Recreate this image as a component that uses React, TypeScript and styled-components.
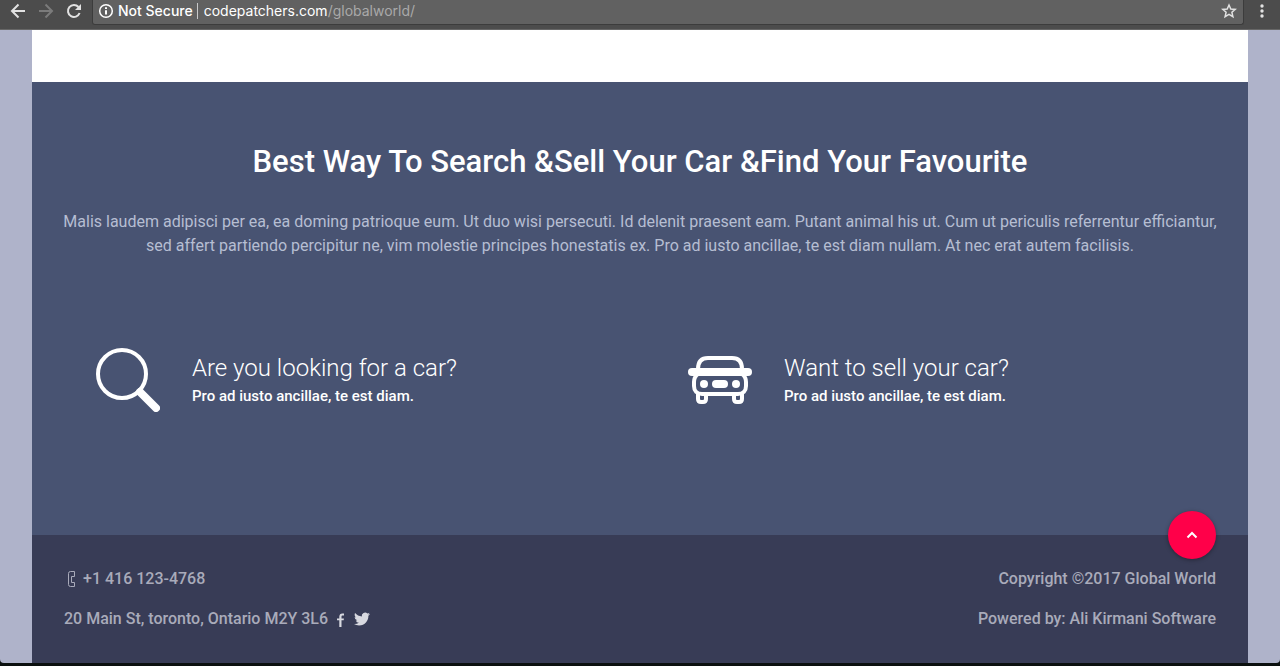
import React from 'react';
import styled, { createGlobalStyle } from 'styled-components';

const GlobalStyle = createGlobalStyle`
  *, *::before, *::after { box-sizing: border-box; }
  body { margin: 0; background: #0b100f; }
  h1, h2, p { margin: 0; font-weight: inherit; }
  button, input { font: inherit; color: inherit; border: 0; padding: 0; margin: 0; background: none; }
  a { color: inherit; text-decoration: none; }
  svg { display: block; flex: none; }
`;

const Window = styled.div`
  display: flex;
  flex-direction: column;
  min-height: 100vh;
  padding-bottom: 3px;
  font-family: Roboto, "Open Sans", sans-serif;
  font-size: 16px;
  line-height: 24px;
`;

const Toolbar = styled.header`
  display: flex;
  align-items: flex-start;
  height: 30px;
  background: #4c4c4c;
  border-bottom: 1px solid #676767;
  color: #e2e2e2;
  font-family: Inter, "Liberation Sans", sans-serif;
  font-size: 14px;
`;

const NavButtons = styled.nav`
  display: flex;
  gap: 12px;
  padding: 3px 10px 0 10px;
`;

const IconButton = styled.button`
  display: block;
  cursor: pointer;
  &:disabled { color: #7b7b7b; cursor: default; }
`;

const AddressBar = styled.div`
  display: flex;
  align-items: center;
  flex: 1;
  height: 25px;
  padding: 0 6px 2px 5px;
  background: #616161;
  border: 1px solid #3c3c3c;
  border-top: 0;
  border-radius: 0 0 3px 3px;
  color: #fff;
`;

const Security = styled.span`
  display: flex;
  align-items: center;
  gap: 4px;
  height: 16px;
  padding-right: 4px;
  margin-right: 6px;
  border-right: 1px solid #c9c9c9;
  font-weight: 500;
`;

const HostInput = styled.input`
  field-sizing: content;
  outline: 0;
`;

const UrlPath = styled.span`
  flex: 1;
  color: #a9a9a9;
`;

const MenuButton = styled(IconButton)`
  padding: 3px 10px 0;
`;

const Backdrop = styled.div`
  display: flex;
  flex: 1;
  padding: 0 32px;
  background: #afb3ca;
  border-radius: 0 0 4px 4px;
`;

const Page = styled.div`
  display: flex;
  flex-direction: column;
  flex: 1;
  padding-top: 52px;
  background: #fff;
`;

const Promo = styled.main`
  flex: 1;
  padding: 56px 16px 112px;
  background: #485372;
  color: #fff;
`;

const Title = styled.h1`
  font-size: 31px;
  line-height: 48px;
  font-weight: 500;
  text-align: center;
`;

const Lead = styled.p`
  padding: 0 8px;
  margin-top: 24px;
  color: #b6bed2;
  text-align: center;
`;

const Features = styled.div`
  display: grid;
  grid-template-columns: 1fr 1fr;
  margin-top: 90px;
`;

const Feature = styled.section`
  display: flex;
  align-items: center;
  gap: 32px;
  padding-left: 48px;
`;

const FeatureTitle = styled.h2`
  font-size: 24px;
  line-height: 32px;
  font-weight: 300;
`;

const FeatureText = styled.p`
  font-size: 15px;
  font-weight: 500;
`;

const Footer = styled.footer`
  position: relative;
  display: flex;
  justify-content: space-between;
  padding: 32px;
  background: #383c56;
  color: #a9abba;
  font-weight: 500;
`;

const FooterColumn = styled.div<{ $end?: boolean }>`
  display: flex;
  flex-direction: column;
  align-items: ${(p) => (p.$end ? 'flex-end' : 'flex-start')};
  gap: 16px;
`;

const FooterLine = styled.div`
  display: flex;
  align-items: center;
`;

const PhoneLink = styled.a`
  display: flex;
  align-items: center;
  gap: 8px;
  padding-left: 4px;
`;

const Social = styled.div`
  display: flex;
  align-items: center;
  gap: 8px;
  padding-left: 8px;
  color: #d8d9e0;
`;

const ScrollTop = styled.button`
  position: absolute;
  top: -24px;
  right: 32px;
  display: flex;
  align-items: center;
  justify-content: center;
  width: 48px;
  height: 48px;
  border-radius: 50%;
  background: #ff0049;
  color: #fff;
  box-shadow: 0 1px 4px rgba(0, 0, 0, 0.35);
  cursor: pointer;
`;

const stroke = { fill: 'none', stroke: 'currentColor', strokeWidth: 2 } as const;

const BackIcon = () => (
  <svg width="16" height="16" viewBox="0 0 16 16" {...stroke}><path d="M15 8H2M8.5 1.5 2 8l6.500 6.500" /></svg>
);
const ForwardIcon = () => (
  <svg width="16" height="16" viewBox="0 0 16 16" {...stroke}><path d="M1 8h13M7.500 1.500 14 8l-6.500 6.500" /></svg>
);
const ReloadIcon = () => (
  <svg width="16" height="16" viewBox="0 0 16 16" {...stroke}>
    <path d="M13.600 10A6 6 0 1 1 12.500 4" />
    <path d="M15 1v6H9z" fill="currentColor" stroke="none" />
  </svg>
);
const InfoIcon = () => (
  <svg width="16" height="16" viewBox="0 0 16 16" {...stroke}>
    <circle cx="8" cy="8" r="6.300" strokeWidth="1.500" />
    <path d="M8 7.200v4.300M8 4.200v1.800" />
  </svg>
);
const StarIcon = () => (
  <svg width="16" height="16" viewBox="0 0 16 16" fill="none" stroke="#e2e2e2" strokeWidth="1.500">
    <path d="m8 2 1.800 4 4.400.4-3.300 2.900 1 4.300L8 11.300l-3.900 2.300 1-4.300L1.800 6.400 6.200 6z" />
  </svg>
);
const MoreIcon = () => (
  <svg width="16" height="16" viewBox="0 0 16 16" fill="currentColor">
    <circle cx="8" cy="3" r="1.700" /><circle cx="8" cy="8" r="1.700" /><circle cx="8" cy="13" r="1.700" />
  </svg>
);
const SearchIcon = () => (
  <svg width="64" height="64" viewBox="0 0 64 64" fill="none" stroke="#fff">
    <circle cx="26" cy="26" r="24" strokeWidth="4" />
    <path d="M44 44 60 60" strokeWidth="8" strokeLinecap="round" />
  </svg>
);
const CarIcon = () => (
  <svg width="64" height="64" viewBox="0 0 64 64" fill="none" stroke="#fff" strokeWidth="4">
    <path d="M10 24v-3C10 14 13 10 20 10h24c7 0 10 4 10 11v3" />
    <path d="M4 24h56" strokeWidth="8" strokeLinecap="round" />
    <path d="M10 26q-4 3-4 8v4c0 5 3 8 8 8h36c5 0 8-3 8-8v-4q0-5-4-8" />
    <path d="M10 45v6q0 3 3 3h2q3 0 3-3v-5M46 46v5q0 3 3 3h2q3 0 3-3v-6" />
    <g fill="#fff" stroke="none">
      <circle cx="16" cy="36" r="4" /><circle cx="48" cy="36" r="4" />
      <rect x="24" y="32" width="16" height="8" rx="4" />
    </g>
  </svg>
);
const PhoneIcon = () => (
  <svg width="7" height="16" viewBox="0 0 7 16" fill="none" stroke="currentColor">
    <path d="M6.500.5h-4q-2 0-2 2v11q0 2 2 2h4v-4H3.500v-6h3z" />
  </svg>
);
const FacebookIcon = () => (
  <svg width="10" height="16" viewBox="0 0 10 16" fill="currentColor">
    <path d="M3.300 16V9.200H1V7.500h2.300V5.800C3.300 3.700 4.500 2.500 6.300 2.500h1.700v1.900H6.700c-.9 0-1.200.5-1.200 1.300v1.800h2.400l-.2 1.700H5.500V16z" />
  </svg>
);
const TwitterIcon = () => (
  <svg width="16" height="16" viewBox="0 0 24 24" fill="currentColor">
    <path d="M23.950 4.570a10 10 0 0 1-2.820.77 4.960 4.960 0 0 0 2.160-2.720c-.95.550-2 .95-3.130 1.180a4.920 4.920 0 0 0-8.380 4.480C7.690 8.100 4.070 6.130 1.640 3.160a4.820 4.820 0 0 0-.67 2.480c0 1.710.87 3.210 2.190 4.100a4.900 4.900 0 0 1-2.230-.62v.06a4.920 4.920 0 0 0 3.950 4.830 5 5 0 0 1-2.210.08 4.940 4.940 0 0 0 4.600 3.420A9.870 9.870 0 0 1 0 19.540a13.990 13.990 0 0 0 7.550 2.210c9.050 0 14-7.500 14-13.980 0-.21 0-.42-.02-.63a9.940 9.940 0 0 0 2.460-2.550z" />
  </svg>
);
const ChevronUpIcon = () => (
  <svg width="12" height="12" viewBox="0 0 12 12" {...stroke}><path d="M1.500 8.500 6 4l4.500 4.500" /></svg>
);

export default function App() {
  return (
    <>
      <GlobalStyle />
      <Window>
        <Toolbar>
          <NavButtons aria-label="History">
            <IconButton aria-label="Back"><BackIcon /></IconButton>
            <IconButton aria-label="Forward" disabled><ForwardIcon /></IconButton>
            <IconButton aria-label="Reload"><ReloadIcon /></IconButton>
          </NavButtons>
          <AddressBar>
            <Security><InfoIcon />Not Secure</Security>
            <HostInput aria-label="Address" defaultValue="codepatchers.com" />
            <UrlPath>/globalworld/</UrlPath>
            <IconButton aria-label="Bookmark"><StarIcon /></IconButton>
          </AddressBar>
          <MenuButton aria-label="Menu"><MoreIcon /></MenuButton>
        </Toolbar>
        <Backdrop>
          <Page>
            <Promo>
              <Title>Best Way To Search &amp;Sell Your Car &amp;Find Your Favourite</Title>
              <Lead>
                Malis laudem adipisci per ea, ea doming patrioque eum. Ut duo wisi persecuti. Id delenit praesent eam.
                Putant animal his ut. Cum ut periculis referrentur efficiantur, sed affert partiendo percipitur ne, vim
                molestie principes honestatis ex. Pro ad iusto ancillae, te est diam nullam. At nec erat autem facilisis.
              </Lead>
              <Features>
                <Feature>
                  <SearchIcon />
                  <div>
                    <FeatureTitle>Are you looking for a car?</FeatureTitle>
                    <FeatureText>Pro ad iusto ancillae, te est diam.</FeatureText>
                  </div>
                </Feature>
                <Feature>
                  <CarIcon />
                  <div>
                    <FeatureTitle>Want to sell your car?</FeatureTitle>
                    <FeatureText>Pro ad iusto ancillae, te est diam.</FeatureText>
                  </div>
                </Feature>
              </Features>
            </Promo>
            <Footer>
              <FooterColumn>
                <PhoneLink href="tel:+14161234768"><PhoneIcon />+1 416 123-4768</PhoneLink>
                <FooterLine>
                  20 Main St, toronto, Ontario M2Y 3L6
                  <Social>
                    <a href="#facebook" aria-label="Facebook"><FacebookIcon /></a>
                    <a href="#twitter" aria-label="Twitter"><TwitterIcon /></a>
                  </Social>
                </FooterLine>
              </FooterColumn>
              <FooterColumn $end>
                <FooterLine>Copyright ©2017 Global World</FooterLine>
                <FooterLine>Powered by: Ali Kirmani Software</FooterLine>
              </FooterColumn>
              <ScrollTop aria-label="Back to top"><ChevronUpIcon /></ScrollTop>
            </Footer>
          </Page>
        </Backdrop>
      </Window>
    </>
  );
}
